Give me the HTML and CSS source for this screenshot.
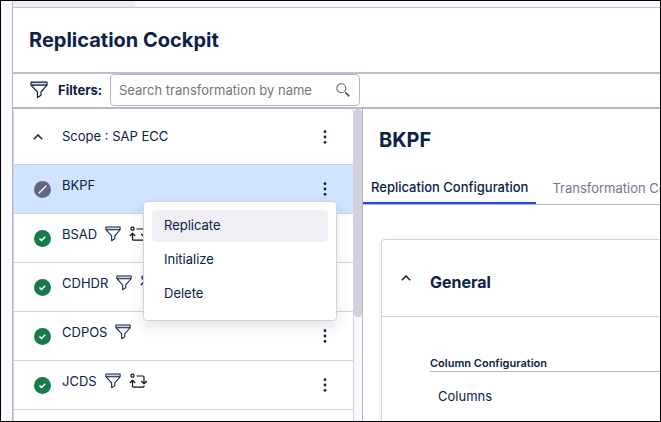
FILE: index.html
```html
<!DOCTYPE html>
<html lang="en">

<head>
    <meta charset="UTF-8">
    <title>Replication Cockpit</title>
    <link rel="stylesheet" href="styles.css">
</head>

<body>
    <!-- Shared icons -->
    <svg class="sprite" aria-hidden="true">
        <symbol id="funnel" viewBox="0 0 18 18">
            <path d="M2 1.5h14v3H2z" fill="#d3d3de" />
            <path d="M1 1.2h16v3L11 11v3.2L7.5 16.6V11L1 4.2zM1 4.2h16" fill="none" stroke="#0c2146" stroke-width="1.2" stroke-linejoin="round" />
        </symbol>
        <symbol id="flow" viewBox="0 0 18 16">
            <rect x="2" y="1.2" width="3" height="3" rx="1" fill="none" stroke="#111" stroke-width="1.2" />
            <path d="M7.5 3H14q1 0 1 1v6M12.2 8l2.8 2.6L17.8 8M3.5 8v5.2q0 1 1 1H14q1 0 1-1V12.5M.8 10l2.7-2.6L6.2 10" fill="none" stroke="#111" stroke-width="1.2" />
        </symbol>
        <symbol id="dots" viewBox="0 0 4 14">
            <circle cx="2" cy="1.7" r="1.4" /><circle cx="2" cy="7" r="1.4" /><circle cx="2" cy="12.3" r="1.4" />
        </symbol>
        <symbol id="done" viewBox="0 0 17 17">
            <circle cx="8.5" cy="8.5" r="8.5" fill="#18794e" />
            <path d="M5.5 8.5l2 2 3.8-3.8" fill="none" stroke="#fff" stroke-width="1.5" />
        </symbol>
        <symbol id="idle" viewBox="0 0 17 17">
            <circle cx="8.5" cy="8.5" r="8.5" fill="#656580" />
            <path d="M4.8 12.2l7.6-7.6" stroke="#fff" stroke-width="1.3" />
        </symbol>
        <symbol id="chevron" viewBox="0 0 10 6">
            <path d="M.8 5.2L5 1l4.2 4.2" fill="none" stroke="#0c2146" stroke-width="1.5" />
        </symbol>
    </svg>

    <div class="app">
        <div class="topbar"><div class="topbar-inner"></div></div>

        <header class="header">
            <h1>Replication Cockpit</h1>
        </header>

        <div class="filters">
            <svg class="filter-icon"><use href="#funnel" /></svg>
            <label for="search">Filters:</label>
            <div class="search">
                <input type="text" id="search" placeholder="Search transformation by name">
                <svg class="search-icon" viewBox="0 0 14 14">
                    <circle cx="5.3" cy="5.3" r="4.5" fill="none" stroke="#62638a" stroke-width="1.1" />
                    <path d="M8.6 8.6l1.5 1.5" stroke="#62638a" stroke-width="1" />
                    <path d="M9.6 9.6l3.6 3.6" stroke="#62638a" stroke-width="2" />
                </svg>
            </div>
        </div>

        <main class="content">
            <div class="tree">
                <ul class="list">
                    <li class="row scope">
                        <button class="toggle" aria-label="Collapse"><svg class="chevron"><use href="#chevron" /></svg></button>
                        <span class="name">Scope : SAP ECC</span>
                        <button class="more" aria-label="More"><svg><use href="#dots" /></svg></button>
                    </li>
                    <li class="row selected">
                        <svg class="status"><use href="#idle" /></svg>
                        <span class="name">BKPF</span>
                        <button class="more" aria-label="More"><svg><use href="#dots" /></svg></button>
                        <div class="menu">
                            <button class="active">Replicate</button>
                            <button>Initialize</button>
                            <button>Delete</button>
                        </div>
                    </li>
                    <li class="row">
                        <svg class="status"><use href="#done" /></svg>
                        <span class="name">BSAD <svg class="tag"><use href="#funnel" /></svg><svg class="flow"><use href="#flow" /></svg></span>
                        <button class="more" aria-label="More"><svg><use href="#dots" /></svg></button>
                    </li>
                    <li class="row">
                        <svg class="status"><use href="#done" /></svg>
                        <span class="name">CDHDR <svg class="tag"><use href="#funnel" /></svg><svg class="flow"><use href="#flow" /></svg></span>
                        <button class="more" aria-label="More"><svg><use href="#dots" /></svg></button>
                    </li>
                    <li class="row">
                        <svg class="status"><use href="#done" /></svg>
                        <span class="name">CDPOS <svg class="tag"><use href="#funnel" /></svg></span>
                        <button class="more" aria-label="More"><svg><use href="#dots" /></svg></button>
                    </li>
                    <li class="row">
                        <svg class="status"><use href="#done" /></svg>
                        <span class="name">JCDS <svg class="tag"><use href="#funnel" /></svg><svg class="flow"><use href="#flow" /></svg></span>
                        <button class="more" aria-label="More"><svg><use href="#dots" /></svg></button>
                    </li>
                </ul>
                <div class="scrollbar"><div class="thumb"></div></div>
            </div>

            <section class="detail">
                <h2>BKPF</h2>
                <nav class="tabs">
                    <button class="tab current">Replication Configuration</button>
                    <button class="tab">Transformation Configuration</button>
                </nav>
                <div class="card">
                    <div class="card-header">
                        <button class="toggle" aria-label="Collapse"><svg class="chevron"><use href="#chevron" /></svg></button>
                        <h3>General</h3>
                    </div>
                    <div class="card-body">
                        <h4>Column Configuration</h4>
                        <p>Columns</p>
                    </div>
                </div>
            </section>
        </main>
    </div>
</body>

</html>
```
FILE: styles.css
```css
* {
    box-sizing: border-box;
}

body {
    margin: 0;
    height: 100vh;
    overflow: hidden;
    border: 1px solid #000;
    padding-left: 11px;
    background-color: #fafafc;
    font-family: Inter, sans-serif;
    font-size: 13px;
    line-height: 20px;
    color: #0c2146;
}

h1, h2, h3, h4, p, ul {
    margin: 0;
    padding: 0;
}

button, input {
    font: inherit;
    color: inherit;
    border: 0;
    padding: 0;
    background: none;
}

button {
    cursor: pointer;
}

svg {
    display: block;
    flex: none;
}

.sprite {
    position: absolute;
    width: 0;
    height: 0;
}

.app {
    height: 100%;
    display: flex;
    flex-direction: column;
    border-left: 1px solid #b5b4c9;
    background-color: #fff;
}

.topbar {
    flex: none;
    height: 7px;
    padding-left: 121px;
    background-color: #f1eff6;
    border-bottom: 1px solid #c3c2d2;
}

.topbar-inner {
    height: 6px;
    background-color: #f9f8fd;
    border-bottom-left-radius: 6px;
}

.header {
    flex: none;
    padding: 16px;
    border-bottom: 2px solid #bfbed1;
}

h1, h2 {
    font-size: 20px;
    line-height: 32px;
    font-weight: 700;
}

.filters {
    flex: none;
    display: flex;
    align-items: center;
    padding: 0 17px 1px;
    border-bottom: 2px solid #b5b4c9;
}

.filter-icon {
    width: 18px;
    height: 18px;
    margin-right: 10px;
}

.filters label {
    width: 52px;
    font-weight: 700;
}

.search {
    display: flex;
    align-items: center;
    width: 250px;
    height: 32px;
    padding: 0 9px 0 8px;
    border: 1px solid #b5b4c9;
    border-radius: 4px;
}

.search input {
    flex: 1;
    min-width: 0;
    outline: none;
}

.search input::placeholder {
    color: #757575;
}

.search-icon {
    width: 14px;
    height: 14px;
}

/* Left side */
.content {
    flex: 1;
    min-height: 0;
    display: flex;
}

.tree {
    flex: none;
    width: 350px;
    display: flex;
    border-right: 1px solid #b5b4c9;
}

.list {
    flex: 1;
    list-style: none;
    border: 1px solid #d2d1de;
    border-width: 0 1px;
    border-radius: 4px 4px 0 0;
}

.row {
    position: relative;
    display: flex;
    align-items: center;
    height: 49px;
    padding: 0 20px;
    border-bottom: 1px solid #d2d1de;
}

.row.scope {
    height: 56px;
}

.row.selected {
    background-color: #d0e4ff;
}

.status {
    width: 17px;
    height: 17px;
}

.toggle {
    width: 17px;
    display: flex;
    justify-content: center;
}

.row .toggle {
    width: 8px;
    margin-right: 9px;
}

.chevron {
    width: 10px;
    height: 6px;
}

.name {
    flex: 1;
    display: flex;
    align-items: center;
    gap: 8px;
    padding: 0 0 8px 11px;
}

.scope .name {
    padding-bottom: 2px;
}

.tag {
    width: 16px;
    height: 16px;
}

.flow {
    width: 18px;
    height: 16px;
}

.more {
    width: 16px;
    height: 24px;
    display: flex;
    align-items: center;
    justify-content: center;
}

.more svg {
    width: 4px;
    height: 14px;
    fill: #0c2146;
}

.menu {
    position: absolute;
    z-index: 1;
    top: 36px;
    right: 16px;
    width: 194px;
    padding: 8px 8px 10px;
    display: flex;
    flex-direction: column;
    gap: 2px;
    border: 1px solid #d2d1de;
    border-radius: 4px;
    background-color: #fff;
    box-shadow: 0 6px 14px rgba(30, 30, 70, 0.12);
}

.menu button {
    height: 32px;
    padding: 0 12px 2px;
    border-radius: 4px;
    text-align: left;
}

.menu .active {
    background-color: #f0eff5;
}

.scrollbar {
    width: 8px;
    background-color: #f9f8fd;
}

.thumb {
    height: 208px;
    border-radius: 4px;
    background-color: #d1d0dd;
}

/* Right side */
.detail {
    flex: 1;
    min-width: 0;
    display: flex;
    flex-direction: column;
    overflow: hidden;
}

.detail h2 {
    padding: 15px 16px;
}

.tabs {
    flex: none;
    display: flex;
    border-bottom: 1px solid #b5b4c9;
}

.tab {
    flex: none;
    height: 33px;
    padding: 0 8px;
    margin-right: 8px;
    color: #75758f;
    white-space: nowrap;
}

.tab.current {
    margin-bottom: -1px;
    border-bottom: 2px solid #2548f0;
    color: #0c2146;
    font-weight: 500;
}

.card {
    flex: 1;
    margin: 34px 0 0 18px;
    border: 1px solid #d2d1de;
    border-width: 1px 0 0 1px;
    border-radius: 4px 0 0 0;
    box-shadow: 0 2px 6px rgba(30, 30, 70, 0.1);
}

.card-header {
    display: flex;
    align-items: center;
    gap: 16px;
    height: 77px;
    padding: 0 15px;
    border-bottom: 1px solid #d2d1de;
}

h3 {
    padding-top: 8px;
    font-size: 16px;
    line-height: 24px;
    font-weight: 700;
}

.card-body {
    padding: 38px 0 0 48px;
}

h4 {
    font-size: 11px;
    line-height: 16px;
    font-weight: 600;
    border-bottom: 1px solid #b5b4c9;
}

.card-body p {
    padding: 14px 8px;
}
```
